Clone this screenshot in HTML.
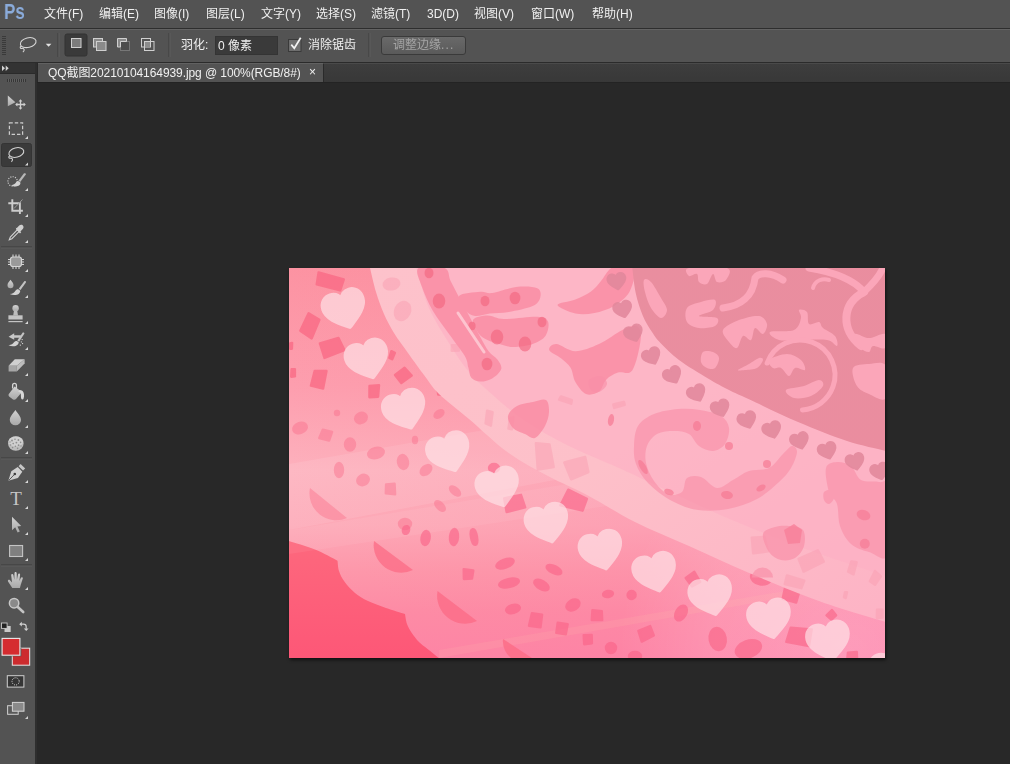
<!DOCTYPE html>
<html lang="zh-CN">
<head>
<meta charset="utf-8">
<title>Photoshop</title>
<style>
html,body{margin:0;padding:0;}
body{width:1010px;height:764px;overflow:hidden;background:#282828;position:relative;
  font-family:"Liberation Sans","Noto Sans CJK SC",sans-serif;font-size:12px;color:#e6e6e6;}
.abs{position:absolute;}
#menubar{left:0;top:0;width:1010px;height:28px;background:#535353;}
#menuline{left:0;top:28px;width:1010px;height:1px;background:#2e2e2e;}
#optbar{left:0;top:29px;width:1010px;height:33px;background:#535353;border-top:1px solid #636363;box-sizing:border-box;}
#optline{left:0;top:62px;width:1010px;height:1px;background:#2b2b2b;}
#tabbar{left:38px;top:63px;width:972px;height:19px;background:linear-gradient(#4a4a4a 0,#4a4a4a 1px,#3d3d3d 1px,#383838 100%);}
#tabline{left:37px;top:82px;width:973px;height:1px;background:#232323;}
#tab{left:38px;top:63px;width:285px;height:19px;background:#535353;border-right:1px solid #2a2a2a;border-top:1px solid #616161;box-sizing:content-box;height:18px;}
#toolhdr{left:0;top:63px;width:35px;height:11px;background:#333;border-bottom:1px solid #2a2a2a;box-sizing:border-box;}
#tools{left:0;top:74px;width:35px;height:690px;background:#535353;}
#toolsep{left:35px;top:63px;width:2px;height:701px;background:#2e2e2e;}
.mi,.ot,#ps{will-change:transform;}
.mi{position:absolute;top:6px;white-space:nowrap;font-size:12px;line-height:16px;color:#f0f0f0;}
#ps{left:3.700px;top:-0.600px;font-family:"Liberation Sans",sans-serif;font-weight:bold;font-size:22px;line-height:26px;color:#8aabda;transform:scaleX(.77);transform-origin:0 0;}
.ot{position:absolute;white-space:nowrap;font-size:12px;line-height:16px;color:#f0f0f0;}
#canvasimg{left:289px;top:268px;width:596px;height:390px;box-shadow:1px 2px 3px rgba(0,0,0,0.6);}
</style>
</head>
<body>
<div class="abs" id="menubar"></div>
<div class="abs" id="menuline"></div>
<div class="abs" id="optbar"></div>
<div class="abs" id="optline"></div>
<div class="abs" id="tabbar"></div>
<div class="abs" id="tabline"></div>
<div class="abs" id="tab"></div>
<div class="abs" id="toolhdr"></div>
<div class="abs" id="tools"></div>
<div class="abs" id="toolsep"></div>


<!-- TOOLS -->
<svg class="abs" style="left:0;top:63px" width="37" height="701" viewBox="0 63 37 701">
<defs>
  <linearGradient id="ig" x1="0" y1="0" x2="0" y2="1"><stop offset="0" stop-color="#d2d2d2"/><stop offset="1" stop-color="#a8a8a8"/></linearGradient>
</defs>
<!-- header arrows -->
<path d="M2 65.500l3 2.700l-3 2.700zM5.700 65.500l3 2.700l-3 2.700z" fill="#d4d4d4"/>
<!-- gripper -->
<g stroke="#363636" stroke-width="1"><path d="M7.500 79v3M9.500 79v3M11.500 79v3M13.500 79v3M15.500 79v3M17.500 79v3M19.500 79v3M21.500 79v3M23.500 79v3M25.500 79v3"/></g>
<g stroke="#606060" stroke-width="1"><path d="M8.500 79v3M10.500 79v3M12.500 79v3M14.500 79v3M16.500 79v3M18.500 79v3M20.500 79v3M22.500 79v3M24.500 79v3"/></g>

<!-- move -->
<path d="M7.800 95.500v10.800l7.600-4z" fill="url(#ig)"/>
<g stroke="#cfcfcf" stroke-width="1.300" fill="none"><path d="M16.600 104.500h7.800M20.500 100.600v7.800"/></g>
<path d="M20.500 99.200l1.900 2.200h-3.800zM20.500 109.800l1.900-2.200h-3.800zM15.200 104.500l2.200-1.900v3.800zM25.800 104.500l-2.200-1.900v3.800z" fill="#cfcfcf"/>

<!-- marquee -->
<g fill="none" stroke="#cdcdcd" stroke-width="1.200" stroke-dasharray="3.400 2"><rect x="9.400" y="122.800" width="13.200" height="11.600"/></g>
<path d="M28 136.0v3h-3z" fill="#d8d8d8"/>

<!-- lasso selected -->
<rect x="1.500" y="143.500" width="30" height="23" rx="2" fill="#3a3a3a" stroke="#343434"/>
<g fill="none" stroke="#d2d2d2" stroke-width="1.100">
  <ellipse cx="16.300" cy="152.500" rx="7.600" ry="4.700" transform="rotate(-14 16.300 152.500)"/>
  <path d="M9.800 156c-1.600 0.600-1.200 2.600 0.600 2.200c1.500-0.300 2.400 0.800 2 2c-0.200 0.800-0.600 1.300-1 1.600"/>
</g>
<path d="M28 162.5v3h-3z" fill="#d8d8d8"/>

<!-- quick selection -->
<circle cx="12.600" cy="181.400" r="4.700" fill="none" stroke="#d0d0d0" stroke-width="1.100" stroke-dasharray="1.100 1.300"/>
<path d="M25.800 174.600l-5.600 7.400l-1.800-1.200l5.400-7.200c1.200-0.800 2.400 0 2 1z" fill="#b8b8b8"/>
<path d="M18.600 181.200l1.800 1.400c0.400 2.200-2 4-5 3.800c-1.600 0-3-0.400-4.200-1.200c2.600-0.200 4.400-1.800 5.200-3.400c0.600-0.800 1.400-1 2.200-0.600z" fill="#d2d2d2"/>
<path d="M28 188.0v3h-3z" fill="#d8d8d8"/>

<!-- crop -->
<g fill="none" stroke="#cccccc" stroke-width="1.900"><path d="M12.300 199.200v11.600h10.600M8.300 203.200h11.600v10.800"/></g>
<path d="M22.500 199.500l-8.500 9" stroke="#9a9a9a" stroke-width="1" fill="none"/>
<path d="M28 214.0v3h-3z" fill="#d8d8d8"/>

<!-- eyedropper -->
<path d="M9.300 239.700l1-2.600l7.200-7.600l1.800 1.800l-7.400 7.400z" fill="none" stroke="#d0d0d0" stroke-width="1.100"/>
<path d="M16.200 229.600l3.800 3.800l1.200-1.200l-0.800-0.800l2.600-2.600c1.200-1.400 0.400-3.400-1-4c-1.200-0.400-2 0-2.800 0.800l-2.600 2.600l-0.800-0.800z" fill="#cfcfcf"/>
<path d="M28 240.0v3h-3z" fill="#d8d8d8"/>
<rect x="1" y="246.500" width="31" height="1" fill="#3c3c3c"/><rect x="1" y="247.500" width="31" height="1" fill="#5e5e5e"/>

<!-- spot healing -->
<rect x="10.500" y="257" width="11" height="9.500" rx="2.500" fill="#9a9a9a" stroke="#d4d4d4" stroke-width="1.200"/>
<g stroke="#d4d4d4" stroke-width="1.100"><path d="M13 254.500v2.500M16 254.500v2.500M19 254.500v2.500M13 266.500v2.500M16 266.500v2.500M19 266.500v2.500M8 259.500h2.500M8 262h2.500M8 264.500h2.500M21.500 259.500h2.500M21.500 262h2.500M21.500 264.500h2.500"/></g>
<path d="M28 269.0v3h-3z" fill="#d8d8d8"/>

<!-- mixer brush -->
<path d="M10.500 279.800c1.600 2 3 3.600 3 5.400a3 3 0 0 1-6 0c0-1.800 1.400-3.400 3-5.400z" fill="url(#ig)"/>
<path d="M25.900 282.400l-5.400 7.600l-1.800-1.200l5.600-7.600c1-0.600 2 0.200 1.600 1.200z" fill="#c4c4c4"/>
<path d="M18.300 289.300l1.900 1.400c0 2.600-2.600 4.600-6 4.400c-1.600 0-3-0.400-4.400-1c3-0.400 4.600-1.800 5.600-3.400c0.800-1.200 1.900-1.800 2.900-1.400z" fill="#d2d2d2"/>
<path d="M28 295.0v3h-3z" fill="#d8d8d8"/>

<!-- stamp -->
<circle cx="15.600" cy="308.200" r="3.200" fill="url(#ig)"/>
<path d="M14 310.500h3.200l0.800 5h-4.800z" fill="#bdbdbd"/>
<rect x="8.400" y="315.300" width="14.200" height="4.200" fill="#c4c4c4"/>
<rect x="8.400" y="321" width="14.200" height="1.200" fill="#c4c4c4"/>
<path d="M28 321.0v3h-3z" fill="#d8d8d8"/>

<!-- history brush -->
<path d="M8.600 336.800l5.600-3.600v2h6.600v2.600h-6.600v2z" fill="#c8c8c8"/>
<path d="M24.300 333.800l-5.200 8l-1.800-1.200l5.400-8c1-0.600 2 0.200 1.600 1.200z" fill="#c4c4c4"/>
<path d="M16.900 341l1.800 1.300c0 2.400-2.400 4.200-5.600 4c-1.600 0-3.200-0.400-4.600-1c3-0.300 4.500-1.500 5.500-3c0.800-1.100 1.900-1.700 2.900-1.300z" fill="#d2d2d2"/>
<g fill="#d0d0d0"><rect x="21.600" y="339" width="1.100" height="1.100"/><rect x="20.800" y="341.400" width="1.100" height="1.100"/><rect x="22" y="343" width="1.100" height="1.100"/><rect x="19.800" y="344.600" width="1.100" height="1.100"/></g>
<path d="M28 347.0v3h-3z" fill="#d8d8d8"/>

<!-- eraser -->
<path d="M8.600 365.800l6.200-6.600h9.800l-7.800 6.600z" fill="#d0d0d0"/>
<path d="M8.600 365.800h8.200v5.800h-8.200z" fill="#a6a6a6"/>
<path d="M16.800 365.800l7.800-6.600v4.200l-7.800 8.200z" fill="#bcbcbc"/>
<path d="M28 373.0v3h-3z" fill="#d8d8d8"/>

<!-- bucket -->
<path d="M12.600 388.600v-3.200c0-2.600 3.800-2.600 3.800 0v5.600" fill="none" stroke="#d4d4d4" stroke-width="1.300"/>
<path d="M14.600 386.400l7.400 5.600l-6 7c-0.800 1-2 1-3 0.400l-3.600-2.600c-1-0.800-1.200-2-0.400-3z" fill="url(#ig)"/>
<path d="M19.400 390c2.600 0 4.400 1.600 4.600 4.200c0.200 1.600 0 3-0.400 4.400c-0.400 1.200-2 1.200-2.400 0c-0.400-1.800-0.200-3.400-0.400-4.600c-0.200-1.400-1.200-2-2.600-2.200z" fill="#d6d6d6"/>
<path d="M28 399.0v3h-3z" fill="#d8d8d8"/>

<!-- blur drop -->
<path d="M15.400 410c2.800 3.800 5.600 6.800 5.600 10a5.600 5.300 0 0 1-11.200 0c0-3.200 2.800-6.200 5.600-10z" fill="url(#ig)"/>
<path d="M28 425.0v3h-3z" fill="#d8d8d8"/>

<!-- sponge -->
<ellipse cx="15.800" cy="443.500" rx="7.800" ry="7.300" fill="#bdbdbd"/>
<ellipse cx="15.800" cy="441.600" rx="7.200" ry="5" fill="#d0d0d0"/>
<g fill="#8e8e8e"><circle cx="12" cy="440.500" r="0.900"/><circle cx="15" cy="439.200" r="0.800"/><circle cx="18.400" cy="440" r="0.900"/><circle cx="20.600" cy="442.400" r="0.800"/><circle cx="16.400" cy="442.600" r="0.900"/><circle cx="13.200" cy="443.600" r="0.800"/><circle cx="10.600" cy="445" r="0.800"/><circle cx="18.600" cy="445.200" r="0.900"/><circle cx="15.400" cy="446.200" r="0.800"/><circle cx="12.600" cy="447.600" r="0.800"/><circle cx="17.600" cy="448.400" r="0.800"/><circle cx="21" cy="446" r="0.700"/><circle cx="10" cy="442" r="0.700"/></g>
<path d="M28 451.0v3h-3z" fill="#d8d8d8"/>
<rect x="1" y="457.500" width="31" height="1" fill="#3c3c3c"/><rect x="1" y="458.500" width="31" height="1" fill="#5e5e5e"/>

<!-- pen -->
<path d="M8.300 480.800l3-9.600l6.400-4.200l4.600 4.800l-4.400 6.200z" fill="#cfcfcf"/>
<path d="M8.800 480.300l5.400-5.600" stroke="#4a4a4a" stroke-width="0.900" fill="none"/>
<circle cx="14.800" cy="474" r="1.300" fill="#3c3c3c"/>
<path d="M18.600 466.200l2-2.200l4.600 4.600l-2.200 2z" fill="#c6c6c6"/>
<path d="M28 480.0v3h-3z" fill="#d8d8d8"/>

<!-- type -->
<text x="16" y="505.200" text-anchor="middle" font-family="Liberation Serif, serif" font-size="19" fill="#c6c6c6">T</text>
<path d="M28 506.0v3h-3z" fill="#d8d8d8"/>

<!-- path selection -->
<path d="M12 516.800v13.400l3.200-3l2.400 5.400l2.200-1l-2.400-5.200l3.800-0.400z" fill="url(#ig)"/>
<path d="M28 532.0v3h-3z" fill="#d8d8d8"/>

<!-- rectangle -->
<rect x="9.600" y="545.500" width="13" height="11" fill="#808080" stroke="#c4c4c4" stroke-width="1.100"/>
<path d="M28 558.0v3h-3z" fill="#d8d8d8"/>
<rect x="1" y="564.500" width="31" height="1" fill="#3c3c3c"/><rect x="1" y="565.500" width="31" height="1" fill="#5e5e5e"/>

<!-- hand -->
<path d="M12.300 588l-4.300-6.600c-0.600-1.400 1-2.200 2-1.200l2 2.200l-0.800-7.200c0-1.400 1.800-1.600 2.200-0.200l0.900 4.800l0.200-6.600c0-1.500 2.100-1.500 2.200 0l0.200 6.600l1.100-5.400c0.400-1.400 2.200-1 2.100 0.400l-0.700 6.200l1.500-3.200c0.700-1.200 2.300-0.500 1.900 0.800l-2.100 6.400l-0.800 3z" fill="url(#ig)"/>
<path d="M28 587.0v3h-3z" fill="#d8d8d8"/>

<!-- zoom -->
<circle cx="14.100" cy="603.200" r="4.700" fill="#8a8a8a" stroke="#c8c8c8" stroke-width="1.500"/>
<path d="M17.800 607l5.400 5" stroke="#c4c4c4" stroke-width="2.600" stroke-linecap="round"/>

<!-- default colors mini -->
<rect x="4.500" y="626" width="6.200" height="6" fill="#c8c8c8"/>
<rect x="1.500" y="623" width="5.600" height="5.400" fill="#222" stroke="#c8c8c8" stroke-width="0.900"/>
<!-- swap -->
<path d="M20.200 624.200h3.400c1.600 0 2.600 1 2.600 2.600v2" fill="none" stroke="#d0d0d0" stroke-width="1.200"/>
<path d="M19.200 624.200l2.600-2.400v4.800zM26.200 631l-2.400-2.600h4.800z" fill="#d0d0d0"/>

<!-- fg/bg -->
<rect x="12.300" y="648.200" width="17.400" height="17" fill="#cc2b2e" stroke="#e6e6e6" stroke-width="1"/>
<rect x="11.800" y="647.700" width="9.500" height="8.600" fill="#535353"/>
<rect x="2.100" y="638.400" width="17.800" height="16.800" fill="#d52c30" stroke="#ebebeb" stroke-width="1.100"/>

<!-- quick mask -->
<rect x="7.300" y="675.700" width="16.600" height="11.400" fill="#353535" stroke="#d0d0d0" stroke-width="1"/>
<circle cx="15.600" cy="681.400" r="3.600" fill="none" stroke="#e0e0e0" stroke-width="1" stroke-dasharray="1 1.050"/>

<!-- screen mode -->
<rect x="7.600" y="705.700" width="10.600" height="8.600" fill="#5a5a5a" stroke="#cfcfcf" stroke-width="1"/>
<rect x="12.400" y="702.400" width="11.600" height="8.800" fill="#8a8a8a" stroke="#d4d4d4" stroke-width="1"/>
<path d="M28 716v3h-3z" fill="#d0d0d0"/>
</svg>

<div class="abs" id="ps">Ps</div>
<span class="mi" style="left:44px">文件(F)</span>
<span class="mi" style="left:99px">编辑(E)</span>
<span class="mi" style="left:154px">图像(I)</span>
<span class="mi" style="left:206px">图层(L)</span>
<span class="mi" style="left:261px">文字(Y)</span>
<span class="mi" style="left:316px">选择(S)</span>
<span class="mi" style="left:371px">滤镜(T)</span>
<span class="mi" style="left:427px">3D(D)</span>
<span class="mi" style="left:474px">视图(V)</span>
<span class="mi" style="left:531px">窗口(W)</span>
<span class="mi" style="left:592px">帮助(H)</span>


<!-- OPTIONS ICONS -->
<svg class="abs" style="left:0;top:29px" width="480" height="33" viewBox="0 29 480 33">
  <g stroke="#3a3a3a" stroke-width="1">
    <path d="M2 36.5h4M2 38.5h4M2 40.5h4M2 42.5h4M2 44.5h4M2 46.5h4M2 48.5h4M2 50.5h4M2 52.5h4M2 54.5h4"/>
  </g>
  <!-- lasso -->
  <g fill="none" stroke="#d6d6d6" stroke-width="1.1">
    <ellipse cx="28.2" cy="42.6" rx="8" ry="4.8" transform="rotate(-14 28.2 42.6)"/>
    <path d="M21.2 46.2c-1.6 0.6-1.2 2.6 0.6 2.2c1.6-0.4 2.8 0.8 2.2 2.2c-0.3 0.8-0.8 1.2-1.2 1.4"/>
  </g>
  <path d="M45.8 43.8h5.6l-2.8 3z" fill="#e4e4e4"/>
  <rect x="57.5" y="33" width="1" height="24" fill="#3e3e3e"/><rect x="58.5" y="33" width="1" height="24" fill="#5f5f5f"/>
  <!-- mode 1 selected -->
  <rect x="65" y="34" width="22" height="22" rx="2" fill="#3a3a3a" stroke="#333" stroke-width="1"/>
  <rect x="71.5" y="38.5" width="9.5" height="9" fill="#7c7c7c" stroke="#cfcfcf" stroke-width="1"/>
  <!-- mode 2 add -->
  <rect x="93.5" y="38.5" width="9" height="8.5" fill="#8a8a8a" stroke="#d0d0d0"/>
  <rect x="96.5" y="41.5" width="9.5" height="9" fill="#8a8a8a" stroke="#d0d0d0"/>
  <!-- mode 3 subtract -->
  <rect x="120.5" y="41.5" width="9" height="9" fill="#4c4c4c" stroke="#777"/>
  <path d="M117.5 38.5h9v3h-6v5.500h-3z" fill="#8a8a8a" stroke="#d0d0d0"/>
  <!-- mode 4 intersect -->
  <rect x="141.500" y="38.500" width="9" height="8.500" fill="none" stroke="#d0d0d0"/>
  <rect x="144.500" y="41.500" width="9.500" height="9" fill="none" stroke="#d0d0d0"/>
  <rect x="145" y="42" width="5" height="4.500" fill="#8c8c8c"/>
  <rect x="168.500" y="33" width="1" height="24" fill="#3e3e3e"/><rect x="169.500" y="33" width="1" height="24" fill="#5f5f5f"/>
  <!-- checkbox -->
  <rect x="288.500" y="39.500" width="12.500" height="12" fill="#6e6e6e" stroke="#3a3a3a"/>
  <path d="M291.300 44.600l3 3.600l6.400-10.400" fill="none" stroke="#f2f2f2" stroke-width="1.700"/>
  <rect x="368.500" y="33" width="1" height="24" fill="#3e3e3e"/><rect x="369.500" y="33" width="1" height="24" fill="#5f5f5f"/>
</svg>
<!-- OPTIONS -->
<span class="ot" style="left:181px;top:37px">羽化:</span>
<div class="abs" style="left:215px;top:36px;width:63px;height:19px;background:#3a3a3a;border:1px solid #343434;box-sizing:border-box;"></div>
<span class="ot" style="left:218px;top:38px">0 像素</span>
<span class="ot" style="left:308px;top:37px">消除锯齿</span>
<div class="abs" style="left:381px;top:36px;width:85px;height:19px;background:linear-gradient(#696969,#5a5a5a);border:1px solid #3a3a3a;border-radius:3px;box-sizing:border-box;"></div>
<span class="ot" style="left:393px;top:37px;color:#a4a4a4">调整边缘<span style="letter-spacing:1.2px">...</span></span>

<!-- TAB -->
<span class="ot" style="left:48px;top:65px;letter-spacing:-0.08px">QQ截图20210104164939.jpg @ 100%(RGB/8#)</span>
<span class="ot" style="left:309px;top:64px;">×</span>

<!-- CANVAS IMAGE -->
<svg class="abs" id="canvasimg" width="596" height="390" viewBox="0 0 596 390">
<defs>
<linearGradient id="bg" x1="0" y1="0" x2="0" y2="1">
 <stop offset="0" stop-color="#fc93a2"/><stop offset=".3" stop-color="#fd9eae"/><stop offset=".52" stop-color="#fdb1bd"/><stop offset=".66" stop-color="#fdaab8"/><stop offset=".78" stop-color="#fd98ab"/><stop offset=".88" stop-color="#fd8ca6"/><stop offset="1" stop-color="#fd85a6"/>
</linearGradient>
<linearGradient id="bgx" x1="0" y1="0" x2="1" y2="0">
 <stop offset="0" stop-color="#ff8090" stop-opacity=".0"/><stop offset="1" stop-color="#ff7ab0" stop-opacity=".35"/>
</linearGradient>
<linearGradient id="deep" x1="0" y1="0" x2="0" y2="1">
 <stop offset="0" stop-color="#fd687d"/><stop offset="1" stop-color="#fd5777"/>
</linearGradient>
<linearGradient id="band" x1="0" y1="0" x2="1" y2="1">
 <stop offset="0" stop-color="#fdc2cb"/><stop offset=".5" stop-color="#fdc0c9"/><stop offset="1" stop-color="#fdb3c5"/>
</linearGradient>
<linearGradient id="dusty" x1="0" y1="0" x2="1" y2="1">
 <stop offset="0" stop-color="#e98e9f"/><stop offset="1" stop-color="#ea8d9f"/>
</linearGradient>
<radialGradient id="lr" cx="560" cy="380" r="230" gradientUnits="userSpaceOnUse"><stop offset="0" stop-color="#fff" stop-opacity=".2"/><stop offset=".6" stop-color="#fff" stop-opacity=".12"/><stop offset="1" stop-color="#fff" stop-opacity="0"/></radialGradient>
<path id="h" d="M0 .8C-.3 .56-.92 .18-.92-.34C-.92-.7-.68-.9-.44-.9C-.22-.9-.06-.76 0-.56C.06-.76 .22-.9 .44-.9C.68-.9 .92-.7 .92-.34C.92 .18 .3 .56 0 .8Z"/>
<clipPath id="clip"><rect width="596" height="390"/></clipPath>
</defs>
<g clip-path="url(#clip)">
<rect width="596" height="390" fill="url(#bg)"/>
<rect width="596" height="390" fill="url(#bgx)"/>
<rect width="596" height="390" fill="url(#lr)"/>
<path d="M0 273C4.3 274.4 17.9 278.2 26 281.5C34.1 284.8 44.8 290.8 48.5 292.7C48.8 294.4 48.9 299.5 50 303C51.1 306.5 52.7 309.8 55.4 313.5C58.1 317.2 62.1 321.8 66 325C69.9 328.2 73.8 330.5 79 333C84.2 335.5 90.8 337.8 97 340C103.2 342.2 112.8 345 116 346C116.3 347.7 116.9 352.8 118 356C119.1 359.2 120.8 362 122.8 365C124.8 368 127.4 371.3 130 374C132.6 376.7 135.1 378.2 138.6 381C142.1 383.8 148.9 389.3 151 391L0 391Z" fill="url(#deep)"/>
<path d="M0 196L596 92L596 150L0 262Z" fill="#fff" opacity=".09"/>
<path d="M0 262L400 196L596 178L596 196L0 286Z" fill="#fff" opacity=".06"/>
<path d="M150 382L596 306L596 312L150 390Z" fill="#ffd0b0" opacity=".12"/>
<path d="M21 220A26.9 26.9 0 0 0 58 250Z" fill="#fb6d87" opacity="0.42"/>
<path d="M85 273A27.5 27.5 0 0 0 124 302Z" fill="#fb6d87" opacity="0.78"/>
<path d="M148.5 323A28 28 0 0 0 188 353Z" fill="#fb6d87" opacity="0.82"/>
<path d="M214 371A21.6 21.6 0 0 0 246 392Z" fill="#fb6d87" opacity="0.85"/>
<g fill="#fa6a85" stroke="#fa6a85" stroke-width="2.400" stroke-linejoin="round" opacity="0.78">
<path d="M29.6 4.4L54.8 11.3L51.2 22.4L27.7 16.4Z"/>
<path d="M19.6 45.3L30.4 51.7L22.7 70.4L11.3 62.7Z"/>
<path d="M30.9 75.3L49.5 70L55.4 82.1L35.5 90Z"/>
<path d="M25.7 102.9L37.5 102.9L34.1 120.5L21.9 117.7Z"/>
<path d="M106 107L115.6 99.8L122.7 107.5L112.3 115.1Z"/>
<path d="M80.5 117.9L90 117.1L89.1 128.7L80.4 129.2Z"/>
<path d="M102.4 83.2L105.9 84.8L103.2 91.3L100.4 89.9Z"/>
<path d="M2.6 101.2L5.9 101.3L5.9 108.4L2.2 108.7Z"/>
<path d="M1 75.4L3.1 74.9L2.9 80.8L1.2 80.9Z"/>
<path d="M148.2 118.8L158.1 119.7L157.4 126.8L149.2 126.6Z"/>
</g>
<g fill="#fa6a88" stroke="#fa6a88" stroke-width="2.400" stroke-linejoin="round" opacity="0.42">
<ellipse cx="11" cy="160" rx="7" ry="5" transform="rotate(-20 11 160)"/>
<path d="M33.8 161.6L43.1 163.9L40.1 172.5L30.3 170Z"/>
<ellipse cx="72" cy="150" rx="6" ry="5" transform="rotate(-25 72 150)"/>
<ellipse cx="61" cy="176.5" rx="5" ry="6" transform="rotate(0 61 176.5)"/>
<ellipse cx="87" cy="185" rx="8" ry="5" transform="rotate(-15 87 185)"/>
<ellipse cx="50" cy="202" rx="4" ry="7" transform="rotate(0 50 202)"/>
<ellipse cx="74" cy="212" rx="6" ry="5" transform="rotate(-30 74 212)"/>
<ellipse cx="114" cy="194" rx="5" ry="7" transform="rotate(-10 114 194)"/>
<path d="M97.1 216.5L105.6 215.8L106.1 226.2L96.8 225.4Z"/>
<ellipse cx="137" cy="202" rx="6" ry="4" transform="rotate(-40 137 202)"/>
<ellipse cx="150" cy="146" rx="5" ry="3" transform="rotate(-35 150 146)"/>
<ellipse cx="166" cy="223" rx="6" ry="3" transform="rotate(40 166 223)"/>
<ellipse cx="151" cy="238" rx="6" ry="3" transform="rotate(45 151 238)"/>
<ellipse cx="116" cy="256" rx="6" ry="5" transform="rotate(0 116 256)"/>
<ellipse cx="48" cy="145" rx="2" ry="2" transform="rotate(0 48 145)"/>
<ellipse cx="126" cy="172" rx="2" ry="3" transform="rotate(0 126 172)"/>
</g>
<g fill="#fa6388" stroke="#fa6388" stroke-width="2.400" stroke-linejoin="round" opacity="0.62">
<ellipse cx="136.6" cy="270" rx="4" ry="7" transform="rotate(10 136.6 270)"/>
<ellipse cx="165" cy="269" rx="4" ry="8" transform="rotate(5 165 269)"/>
<ellipse cx="185" cy="269" rx="3" ry="8" transform="rotate(-10 185 269)"/>
<ellipse cx="117" cy="262" rx="3" ry="4" transform="rotate(20 117 262)"/>
<path d="M174.7 301.3L184.3 302.5L183 310.6L174.9 311Z"/>
<ellipse cx="216" cy="295.6" rx="9" ry="4" transform="rotate(-20 216 295.6)"/>
<ellipse cx="265" cy="301.6" rx="8" ry="3.5" transform="rotate(25 265 301.6)"/>
<ellipse cx="220" cy="315" rx="10" ry="4" transform="rotate(-12 220 315)"/>
<ellipse cx="252.5" cy="317" rx="8" ry="4" transform="rotate(30 252.5 317)"/>
<ellipse cx="224" cy="341" rx="7" ry="4" transform="rotate(-15 224 341)"/>
<path d="M242.9 345.2L253.1 346.6L251.5 359.4L240 357.7Z"/>
<ellipse cx="284" cy="337" rx="7" ry="5" transform="rotate(-30 284 337)"/>
<path d="M303.4 342.2L312.8 343.2L313.2 352L302.8 352Z"/>
<path d="M268.7 354.8L278.7 356.1L276.8 366.4L267.3 364.9Z"/>
<path d="M294.7 367.2L302.7 367L302.9 375.3L295.2 376.2Z"/>
<ellipse cx="319" cy="326" rx="5" ry="3" transform="rotate(-10 319 326)"/>
<ellipse cx="342.6" cy="327" rx="4" ry="4" transform="rotate(40 342.6 327)"/>
<path d="M349.4 362.8L361.2 358.1L364.8 367.4L352.8 373.6Z"/>
<ellipse cx="392" cy="345" rx="5" ry="8" transform="rotate(30 392 345)"/>
<ellipse cx="322" cy="380" rx="5" ry="5" transform="rotate(0 322 380)"/>
<ellipse cx="346" cy="388" rx="6" ry="4" transform="rotate(0 346 388)"/>
<path d="M215.2 230.3L232 226.8L236.2 239.3L217.6 244Z"/>
<path d="M279.2 221.7L297.9 230.8L293.6 242.7L271.4 237.3Z"/>
<ellipse cx="205" cy="200" rx="5" ry="4" transform="rotate(0 205 200)"/>
</g>
<g fill="#fa6a8c" stroke="#fa6a8c" stroke-width="2.400" stroke-linejoin="round" opacity="0.7">
<ellipse cx="472" cy="309.5" rx="10" ry="7" transform="rotate(10 472 309.5)"/>
<path d="M497 315.2L511.4 319.9L507.2 334.5L493.6 330.9Z"/>
<ellipse cx="428.7" cy="371" rx="8" ry="11" transform="rotate(-10 428.7 371)"/>
<ellipse cx="459.4" cy="381" rx="13" ry="8" transform="rotate(-20 459.4 381)"/>
<path d="M501.7 359.8L522.7 361.4L520 378.1L497.3 373.9Z"/>
<path d="M542.9 342.1L547.1 347.3L542.4 351.5L537.5 347.4Z"/>
<path d="M396.7 310L405.3 303.8L411.2 313.9L402.9 318.4Z"/>
<path d="M558.9 384.8L567.8 383.9L568.1 391.6L558.2 392Z"/>
</g>
<path d="M81 0C82 4 84.7 16.3 87 24C89.3 31.7 92 39.2 95 46C98 52.8 101 58.5 105 65C109 71.5 114 78 119 85C124 92 129.8 100.2 135 107C140.2 113.8 142.5 118.7 150 126C157.5 133.3 168.5 141.2 180 151C191.5 160.8 205.8 175 219 184.5C232.2 194 245.8 200.9 259 208C272.2 215.1 283.5 219.3 298 227C312.5 234.7 329 245.5 346 254C363 262.5 381.2 269.6 400 278C418.8 286.4 439.2 296 459 304.5C478.8 313 502.2 322.6 519 329C535.8 335.4 547 338.8 560 343C573 347.2 590.8 352.2 597 354L597 -1L81 -1Z" fill="url(#band)"/>
<path d="M127 -1C129.2 5.8 134.5 27.3 140 40C145.5 52.7 153.3 64.3 160 75C166.7 85.7 172.5 95.2 180 104C187.5 112.8 195.7 119.8 205 128C214.3 136.2 223.5 144.7 236 153C248.5 161.3 264.3 170.2 280 178C295.7 185.8 311.7 191.7 330 200C348.3 208.3 370.3 219 390 228C409.7 237 426.3 245 448 254C469.7 263 495.2 273 520 282C544.8 291 584.2 303.7 597 308L597 -1Z" fill="#fdb0c4" opacity=".66"/>
<g fill="#fa9fb2" opacity=".5">
<ellipse cx="102.5" cy="16" rx="9" ry="6.5" transform="rotate(-10 102.5 16)"/>
<ellipse cx="113.5" cy="43" rx="8.5" ry="10.5" transform="rotate(25 113.5 43)"/>
</g>
<g fill="#fa9fb2" stroke="#fa9fb2" stroke-width="2.400" stroke-linejoin="round" opacity=".5">
<path d="M162.9 77.2L170.1 77.1L169.9 82.6L162.8 82.9Z"/>
<path d="M198.1 142.7L203.6 144.1L201.9 157.7L196.6 155.4Z"/>
<path d="M220.9 150.1L224.5 149.1L223 161.3L219.5 160.6Z"/>
<path d="M246.9 175.3L260.5 176.4L264.7 199L248.8 201.6Z"/>
<path d="M275.3 194.5L296.2 189L299.4 204.1L282.2 211.3Z"/>
<path d="M272 128.4L282.9 132.1L282.2 135.7L270.1 131.6Z"/>
<path d="M324.3 136.5L334.9 133.9L335.7 136.9L325.2 139.9Z"/>
<path d="M462.8 269.7L475.5 268.8L479 283.4L464.2 285.4Z"/>
<path d="M509.6 290.9L528.9 282.4L534.8 293.6L514.6 303.6Z"/>
<path d="M497.9 307.5L515.3 312.6L512.3 320.2L495.8 316Z"/>
<path d="M562.3 293.5L567.6 294.1L564.5 306.4L559.1 303.7Z"/>
<path d="M586 303.1L591.9 308.4L586 316.7L580.9 313.3Z"/>
<path d="M556.1 324.1L558 324.2L556.7 330L555 329.1Z"/>
<path d="M588 341.8L593.4 341.8L593.6 349.6L587.9 350Z"/>
</g>
<g fill="#fa8ea5" opacity=".85">
<path d="M129.5 0C125.7 3.2 130.6 11.9 133 19C135.4 26.1 139.2 34.9 143.8 42.8C148.4 50.7 155.1 59 160.4 66.5C165.7 74 172.6 82.5 175.8 88C179 93.5 178.3 96.2 179.4 99.8C180.5 103.4 180.3 107.5 182.3 109.8C184.3 112.1 187.8 113.5 191.3 113.6C194.8 113.7 199.7 112.6 203.2 110.5C206.7 108.4 211.3 104.2 212.2 101C213.1 97.8 210.5 94.5 208.4 91.5C206.3 88.5 202.4 87 199.6 83.2C196.8 79.5 194.3 74.4 191.3 69C188.3 63.6 185.2 57.3 181.8 51C178.4 44.7 174.4 37.3 171 31C167.6 24.7 164.2 18.2 161.6 13C159 7.8 160.9 2.2 155.6 0C150.2 -2.2 133.3 -3.2 129.5 0Z"/>
<path d="M170 28C172.6 25 185.8 24.3 191.3 23.8C196.8 23.3 197.2 25.8 203.2 25C209.1 24.2 219.5 19.8 227 19C234.5 18.2 244.3 18.4 248.3 20.2C252.3 22 252 26.7 251.2 29.7C250.4 32.7 248.8 35.6 243.6 38C238.4 40.4 226.9 42.7 219.8 44C212.7 45.3 206.4 44.9 200.8 45.6C195.2 46.3 190.1 48.6 186 48C181.9 47.4 178.7 45.3 176 42C173.3 38.7 167.4 31 170 28Z"/>
<path d="M184 52C185.4 48.9 193.2 47.7 198.4 47.5C203.6 47.3 206.7 50.8 215 51C223.3 51.2 241 48.3 248.3 48.7C255.6 49.1 257.6 50.3 259 53.5C260.4 56.7 259.2 64 256.6 67.7C254 71.5 248.9 74.1 243.6 76C238.3 77.9 230.1 79 224.6 79C219.1 79 214.7 77.2 210.3 76C205.9 74.8 201.8 73.7 198.4 72C195 70.3 192.4 69.3 190 66C187.6 62.7 182.6 55.1 184 52Z"/>
<path d="M268.5 37C268.5 34.7 280.8 33.8 286.4 31.5C292 29.2 297.7 26.6 302 23.5C306.3 20.4 309 16.6 312 13C315 9.4 317 4.8 320 2C323 -0.8 325.8 -4 330 -4C334.2 -4 343.2 -2.6 345 2C346.8 6.6 343.8 17.8 340.5 23.8C337.2 29.8 330.9 34.5 325 38C319.1 41.5 311.8 43.8 305.4 45C299 46.2 292.5 46.8 286.4 45.5C280.2 44.2 268.5 39.3 268.5 37Z"/>
<path d="M260.2 82C259.4 79.6 262.9 75.8 267.3 76C271.7 76.2 279.3 83.2 286.4 83.2C293.5 83.2 302.1 79.6 310 76C317.9 72.4 327.6 64.8 333.9 61.8C340.2 58.8 345 56.6 348 58.2C351 59.8 352.5 64 351.7 71.3C350.9 78.6 347.2 96.7 343.4 102.2C339.6 107.8 333.4 103 329 104.6C324.6 106.2 320.4 108.5 317.2 111.7C314 114.9 313.4 121.2 310 123.6C306.6 126 300.9 127.6 297 126C293.1 124.4 289 118.4 286.4 114C283.8 109.6 284 103.8 281.6 99.8C279.2 95.8 275.6 93.3 272 90.3C268.4 87.3 261 84.4 260.2 82Z"/>
<path d="M219 148C219.7 144.3 223.8 140.3 228 138C232.2 135.7 239.2 135 244 134C248.8 133 254.3 130.3 257 132C259.7 133.7 260.2 139.7 260 144C259.8 148.3 258.3 153.7 256 158C253.7 162.3 249.3 168.7 246 170C242.7 171.3 239.7 167.7 236 166C232.3 164.3 226.8 163 224 160C221.2 157 218.3 151.7 219 148Z"/>
</g>
<g fill="#f98fa8" opacity=".62">
<path d="M345 178C345.3 171.7 345.7 163.3 349 158C352.3 152.7 358.3 148.8 365 146C371.7 143.2 381.3 141.7 389 141C396.7 140.3 403.8 140.8 411 142C418.2 143.2 427.2 145 432 148C436.8 151 439.3 155.3 440 160C440.7 164.7 438.7 172.2 436 176C433.3 179.8 428.3 182.7 424 183C419.7 183.3 414 180.8 410 178C406 175.2 404.2 168.5 400 166C395.8 163.5 390.3 163 385 163C379.7 163 372.5 163.5 368 166C363.5 168.5 359.8 173.2 358 178C356.2 182.8 355.8 189.2 357 195C358.2 200.8 361.3 207.8 365 213C368.7 218.2 374.3 224.2 379 226C383.7 227.8 389.8 226.7 393 224C396.2 221.3 394.8 212.5 398 210C401.2 207.5 407 207.3 412 209C417 210.7 422.7 219.5 428 220C433.3 220.5 438.7 214.8 444 212C449.3 209.2 454 205 460 203C466 201 474.3 202.8 480 200C485.7 197.2 490.2 189.7 494 186C497.8 182.3 500.7 178.3 503 178C505.3 177.7 508.2 180.3 508 184C507.8 187.7 505 195 502 200C499 205 495.7 208.8 490 214C484.3 219.2 476.5 226.5 468 231C459.5 235.5 448.8 239.2 439 241C429.2 242.8 418.3 243.3 409 242C399.7 240.7 391.3 237.5 383 233C374.7 228.5 365 221.2 359 215C353 208.8 349.3 202.2 347 196C344.7 189.8 344.7 184.3 345 178Z"/>
<path d="M537 200C538.3 195 543.8 194.3 548 194C552.2 193.7 558 195 562 198C566 201 567.3 209.3 572 212C576.7 214.7 585.3 212.7 590 214C594.7 215.3 598.3 208 600 220C601.7 232 603.3 275.3 600 286C596.7 296.7 586.3 285.7 580 284C573.7 282.3 566.8 280.3 562 276C557.2 271.7 553.3 264.7 551 258C548.7 251.3 549.8 241.7 548 236C546.2 230.3 541.8 230 540 224C538.2 218 535.7 205 537 200Z"/>
<path d="M535 224C536.2 222.3 540.3 221 542 222C543.7 223 545.3 227.7 545 230C544.7 232.3 541.7 235.7 540 236C538.3 236.3 535.8 234 535 232C534.2 230 533.8 225.7 535 224Z"/>
<path d="M300 112C301.7 109.7 309 107.3 312 108C315 108.7 318.3 113.3 318 116C317.7 118.7 312.7 123 310 124C307.3 125 303.7 124 302 122C300.3 120 298.3 114.3 300 112Z"/>
</g>
<g fill="#f77e98" opacity=".75">
<ellipse cx="574.5" cy="247" rx="7" ry="5" transform="rotate(20 574.5 247)"/>
<ellipse cx="575.8" cy="275.7" rx="5" ry="5" transform="rotate(0 575.8 275.7)"/>
</g>
<g fill="#fa93ab" opacity=".75">
<path d="M474 266C475 261.8 481.7 260.3 486 259C490.3 257.7 495.3 257.5 500 258C504.7 258.5 511.5 258.7 514 262C516.5 265.3 516.3 273.3 515 278C513.7 282.7 509.8 287.7 506 290C502.2 292.3 496.3 293 492 292C487.7 291 483 288.3 480 284C477 279.7 473 270.2 474 266Z"/>
<path d="M463 309.500A10.500 10 0 0 1 484 309.500Z"/>
</g>
<g fill="#f7809a" opacity=".8">
<path d="M495 262L505 256L513 262L511 275L499 276Z"/>
</g>
<g fill="#f3657f" opacity=".62">
<ellipse cx="140" cy="5" rx="4.5" ry="5.2"/>
<ellipse cx="150" cy="33" rx="6.3" ry="7.4"/>
<ellipse cx="196" cy="33" rx="4.5" ry="5.2"/>
<ellipse cx="226" cy="30" rx="5.4" ry="6.3"/>
<ellipse cx="183" cy="58" rx="3.6" ry="4.2"/>
<ellipse cx="208" cy="69" rx="6.3" ry="7.4"/>
<ellipse cx="236" cy="76" rx="6.3" ry="7.4"/>
<ellipse cx="253" cy="54" rx="4.5" ry="5.2"/>
<ellipse cx="198" cy="96" rx="5.4" ry="6.3"/>
</g>
<g fill="#f67a94" opacity=".7">
<ellipse cx="354" cy="199" rx="3" ry="8" transform="rotate(-30 354 199)"/>
<ellipse cx="380" cy="224" rx="5" ry="3" transform="rotate(20 380 224)"/>
<ellipse cx="438" cy="227" rx="6" ry="4" transform="rotate(10 438 227)"/>
<ellipse cx="472" cy="220" rx="5" ry="3" transform="rotate(-30 472 220)"/>
<ellipse cx="408" cy="158" rx="4" ry="5" transform="rotate(0 408 158)"/>
<ellipse cx="322" cy="152" rx="3" ry="6" transform="rotate(10 322 152)"/>
<ellipse cx="478" cy="196" rx="4" ry="4" transform="rotate(0 478 196)"/>
<ellipse cx="440" cy="178" rx="4" ry="4" transform="rotate(0 440 178)"/>
</g>
<path d="M169 45L195 84" stroke="#fdc4cf" stroke-width="3" stroke-linecap="round" fill="none"/>
<path d="M343.3 0C343.9 4.2 345 17.1 346.7 25C348.4 32.9 351 41 353.7 47.5C356.4 54 360 59.4 363 64C366 68.6 367 70.3 371.5 75C376 79.7 382.1 86.1 390 92C397.9 97.9 410.7 105.5 419 110.5C427.3 115.5 433.2 118.5 440 122C446.8 125.5 448.5 126 460 131.3C471.5 136.6 492.7 147.1 509 154C525.3 160.9 543.3 168.2 558 173C572.7 177.8 590.5 181.3 597 183L597 -1L343.5 -1Z" fill="url(#dusty)"/>
<g fill="#fba6b9">
<path d="M400 0C406.3 -1.3 431.8 -2 438 0C444.2 2 438.7 9.7 437 12C435.3 14.3 430.2 15 428 14C425.8 13 425.7 5.7 424 6C422.3 6.3 420.3 14.7 418 16C415.7 17.3 411.7 15.7 410 14C408.3 12.3 409.7 7 408 6C406.3 5 401.3 9 400 8C398.7 7 393.7 1.3 400 0Z"/>
<path d="M398 40C400.3 36.7 407.3 35.3 412 34C416.7 32.7 424 30.7 426 32C428 33.3 426.7 39.3 424 42C421.3 44.7 409.3 46.7 410 48C410.7 49.3 425.3 48.3 428 50C430.7 51.7 429 56.3 426 58C423 59.7 414.7 60.7 410 60C405.3 59.3 400 57.3 398 54C396 50.7 395.7 43.3 398 40Z"/>
<path d="M434 62C435.7 58.3 444 54.3 450 52C456 49.7 465.3 47.3 470 48C474.7 48.7 477.3 53 478 56C478.7 59 476 65.3 474 66C472 66.7 468 59 466 60C464 61 464 70.7 462 72C460 73.3 456.3 66.7 454 68C451.7 69.3 450.3 79 448 80C445.7 81 442.3 77 440 74C437.7 71 432.3 65.7 434 62Z"/>
<path d="M481 64C483.5 62.3 499.8 64.3 505 62C510.2 59.7 511.2 53.3 512 50C512.8 46.7 509 43 510 42C511 41 516.3 41.7 518 44C519.7 46.3 518 54.3 520 56C522 57.7 527.7 53.3 530 54C532.3 54.7 531.3 57.7 534 60C536.7 62.3 543.7 65 546 68C548.3 71 549.3 77.3 548 78C546.7 78.7 544.3 73 538 72C531.7 71 518 72 510 72C502 72 494.8 73.3 490 72C485.2 70.7 478.5 65.7 481 64Z"/>
<path d="M414 84C416 82.3 421.3 83 424 84C426.7 85 429.7 87.3 430 90C430.3 92.7 428 98.3 426 100C424 101.7 420.3 101 418 100C415.7 99 412.7 96.7 412 94C411.3 91.3 412 85.7 414 84Z"/>
<path d="M449 102C449.7 101 456.5 98 460 96C463.5 94 467.7 90.7 470 90C472.3 89.3 474.3 90.3 474 92C473.7 93.7 471 98.3 468 100C465 101.7 459.2 101.7 456 102C452.8 102.3 448.3 103 449 102Z"/>
<path d="M564 100C566 96.3 574.5 96.3 580 96C585.5 95.7 594.2 92.3 597 98C599.8 103.7 599.8 125.3 597 130C594.2 134.7 584.8 128 580 126C575.2 124 570.7 122.3 568 118C565.3 113.7 562 103.7 564 100Z"/>
<path d="M355 12C356 10.3 359.2 11 362 14C364.8 17 369.3 25.3 372 30C374.7 34.7 378 38.7 378 42C378 45.3 374.7 50.3 372 50C369.3 49.7 364.7 44.3 362 40C359.3 35.7 357.2 28.7 356 24C354.8 19.3 354 13.7 355 12Z"/>
</g>
<g fill="none" stroke="#fba6b9" stroke-linecap="round">
<path d="M434 40C452 38 464 28 466 10C470 4 482 4 494 12" stroke-width="7"/>
<path d="M540 30C530 46 540 70 562 84" stroke-width="6" opacity="0"/>
<circle cx="511" cy="107" r="35" stroke-width="5" stroke-dasharray="150 70" transform="rotate(-160 511 107)"/>
<path d="M520 0C545 4 565 12 575 24C590 10 592 4 594 0" stroke-width="7"/>
<path d="M575 24C552 36 552 62 572 78" stroke-width="8"/>
<path d="M524 20C526 12 534 10 540 12" stroke-width="4"/>
</g>
<g fill="#fba6b9">
<path d="M480 92C482.3 89.7 492.7 86 498 86C503.3 86 509 89.3 512 92C515 94.7 517 100.7 516 102C515 103.3 508.7 99 506 100C503.3 101 502.3 108 500 108C497.7 108 494.7 101.3 492 100C489.3 98.7 486 101.3 484 100C482 98.7 477.7 94.3 480 92Z"/>
<path d="M497 122C498.7 120 509.5 119.7 515 118C520.5 116.3 526.8 112 530 112C533.2 112 535.3 115.3 534 118C532.7 120.7 526.8 126 522 128C517.2 130 509.2 131 505 130C500.8 129 495.3 124 497 122Z"/>
<path d="M566 66C567.3 64.3 575 70 580 70C585 70 593.3 64.3 596 66C598.7 67.7 598 78 596 80C594 82 586.7 77.3 584 78C581.3 78.7 582 83.7 580 84C578 84.3 574.3 83 572 80C569.7 77 564.7 67.7 566 66Z"/>
</g>
<g fill="#e2889c" stroke="#e2889c" stroke-width=".16" stroke-linejoin="round" opacity=".88">
<use href="#h" transform="translate(328 14) rotate(-10) scale(10 9.500)"/>
<use href="#h" transform="translate(334 42) rotate(-15) scale(10 9.500)"/>
<use href="#h" transform="translate(345 66) rotate(-20) scale(10 9.500)"/>
<use href="#h" transform="translate(363 89) rotate(-25) scale(10 9.500)"/>
<use href="#h" transform="translate(384 108) rotate(-28) scale(10 9.500)"/>
<use href="#h" transform="translate(431.7 141) rotate(-20) scale(10 9.500)"/>
<use href="#h" transform="translate(458.4 152.8) rotate(-20) scale(10 9.500)"/>
<use href="#h" transform="translate(483.2 162.7) rotate(-18) scale(10 9.500)"/>
<use href="#h" transform="translate(510.9 173.6) rotate(-18) scale(10 9.500)"/>
<use href="#h" transform="translate(538.6 183.5) rotate(-18) scale(10 9.500)"/>
<use href="#h" transform="translate(566.3 194.4) rotate(-15) scale(10 9.500)"/>
<use href="#h" transform="translate(591 204) rotate(-15) scale(10 9.500)"/>
<use href="#h" transform="translate(408 126) rotate(-25) scale(10 9.500)"/>
</g>
<g fill="#fee3e8" stroke="#fee3e8" stroke-width=".16" stroke-linejoin="round" opacity=".68">
<use href="#h" transform="translate(56 42.7) rotate(-17) scale(22.500 21.500)"/>
<use href="#h" transform="translate(79 93) rotate(-17) scale(22.500 21.500)"/>
<use href="#h" transform="translate(116.5 143.5) rotate(-19) scale(22.500 21.500)"/>
<use href="#h" transform="translate(160.6 186) rotate(-19) scale(22.500 21.500)"/>
<use href="#h" transform="translate(209.8 221) rotate(-17) scale(22.500 21.500)"/>
<use href="#h" transform="translate(258.8 257) rotate(-15) scale(22.500 21.500)"/>
<use href="#h" transform="translate(312.8 284) rotate(-15) scale(22.500 21.500)"/>
<use href="#h" transform="translate(366.4 306) rotate(-14) scale(22.500 21.500)"/>
<use href="#h" transform="translate(422.5 329.5) rotate(-14) scale(22.500 21.500)"/>
<use href="#h" transform="translate(481 352.5) rotate(-12) scale(22.500 21.500)"/>
<use href="#h" transform="translate(540 374.5) rotate(-12) scale(22.500 21.500)"/>
<use href="#h" transform="translate(603 404) rotate(-10) scale(22.500 21.500)"/>
</g>
</g></svg>
</body>
</html>
